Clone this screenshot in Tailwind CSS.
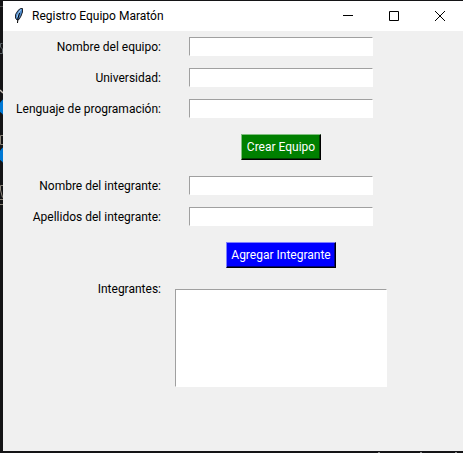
<!DOCTYPE html>
<html lang="es">
<head>
<meta charset="utf-8">
<meta name="viewport" content="width=device-width, initial-scale=1">
<title>Registro Equipo Maratón</title>
<script src="https://cdn.jsdelivr.net/npm/@tailwindcss/browser@4"></script>
</head>
<body class="relative min-h-screen bg-[#141416] pt-px pb-[2px] pl-[3px] flex flex-col text-[12px] leading-[16px] text-black font-[Roboto,'Open_Sans',sans-serif]">
  <!-- Desktop content that shows past the window's left and bottom edges -->
  <svg class="absolute left-0 top-0" width="3" height="210" viewBox="0 0 3 210" fill="none" aria-hidden="true">
    <path d="M0 6.500h3" stroke="#4a4a4a"/>
    <path d="M2.500 43.500H0.500V47L2.500 49V53.500H0" stroke="#5c6468"/>
    <path d="M0 90l3 3" stroke="#c8c0b8" stroke-width="1.500"/>
    <circle cx="8" cy="107" r="9" fill="#0078d4"/>
    <circle cx="8" cy="155" r="9" fill="#0078d4"/>
    <path d="M3 135.500H0.500V144.500H3M3 185.500H0.500V190L2.500 197.500M0 199.500H3M0 204.500H3" stroke="#8a8378"/>
  </svg>
  <svg class="absolute bottom-0 right-0" width="90" height="1" viewBox="0 0 90 1" aria-hidden="true">
    <path d="M5 0h2v1h-2zM47 0h2v1h-2zM82 0h2v1h-2z" fill="#8a8a8a"/>
  </svg>

  <div class="flex-1 flex flex-col bg-[#f0f0f0]">
    <header class="flex h-[30px] items-center bg-white">
      <svg class="ml-[8px] shrink-0" width="16" height="16" viewBox="0 0 16 16" aria-hidden="true">
        <path d="M9.500 0.500H11.500V4L10 8L8 11.500L6 12L4.500 10V6.500L7 2.500Z" fill="#4a86c8" stroke="#20242c"/>
        <path d="M10 1.500L7.500 5L6 9.500" fill="none" stroke="#a9d2f5"/>
        <path d="M8.500 5L7 10L6.500 15" fill="none" stroke="#000"/>
      </svg>
      <h1 class="ml-[5px] flex-1 whitespace-nowrap">Registro Equipo Maratón</h1>
      <div class="flex h-full">
        <button type="button" aria-label="Minimizar" class="flex w-[46px] items-center justify-center"><svg width="10" height="10" viewBox="0 0 10 10" aria-hidden="true"><path d="M0 4.500H10" stroke="#000"/></svg></button>
        <button type="button" aria-label="Maximizar" class="flex w-[46px] items-center justify-center"><svg width="10" height="10" viewBox="0 0 10 10" fill="none" aria-hidden="true"><path d="M0.500 0.500H9.500V9.500H0.500Z" stroke="#000"/></svg></button>
        <button type="button" aria-label="Cerrar" class="flex w-[46px] items-center justify-center"><svg width="10" height="10" viewBox="0 0 10 10" aria-hidden="true"><path d="M0 0L10 10M10 0L0 10" stroke="#000"/></svg></button>
      </div>
    </header>

    <form class="grid grid-cols-[158px_212px] gap-x-[14px]">
      <label for="equipo" class="flex h-[31px] items-center justify-end whitespace-nowrap">Nombre del equipo:</label>
      <div class="flex items-center justify-center"><input id="equipo" type="text" class="h-[19px] w-[184px] border border-t-[#a0a0a0] border-l-[#a0a0a0] border-r-white border-b-white bg-white px-px outline-none"></div>
      <label for="universidad" class="flex h-[31px] items-center justify-end whitespace-nowrap">Universidad:</label>
      <div class="flex items-center justify-center"><input id="universidad" type="text" class="h-[19px] w-[184px] border border-t-[#a0a0a0] border-l-[#a0a0a0] border-r-white border-b-white bg-white px-px outline-none"></div>
      <label for="lenguaje" class="flex h-[31px] items-center justify-end whitespace-nowrap">Lenguaje de programación:</label>
      <div class="flex items-center justify-center"><input id="lenguaje" type="text" class="h-[19px] w-[184px] border border-t-[#a0a0a0] border-l-[#a0a0a0] border-r-white border-b-white bg-white px-px outline-none"></div>

      <div class="col-start-2 flex justify-center py-[10px]">
        <button type="button" class="h-[26px] w-[80px] whitespace-nowrap border border-t-[#80c080] border-l-[#80c080] border-r-black border-b-black bg-[#008000] text-white shadow-[inset_-1px_-1px_0_#004000]">Crear Equipo</button>
      </div>

      <label for="nombre" class="flex h-[31px] items-center justify-end whitespace-nowrap">Nombre del integrante:</label>
      <div class="flex items-center justify-center"><input id="nombre" type="text" class="h-[19px] w-[184px] border border-t-[#a0a0a0] border-l-[#a0a0a0] border-r-white border-b-white bg-white px-px outline-none"></div>
      <label for="apellidos" class="flex h-[31px] items-center justify-end whitespace-nowrap">Apellidos del integrante:</label>
      <div class="flex items-center justify-center"><input id="apellidos" type="text" class="h-[19px] w-[184px] border border-t-[#a0a0a0] border-l-[#a0a0a0] border-r-white border-b-white bg-white px-px outline-none"></div>

      <div class="col-start-2 flex justify-center py-[10px]">
        <button type="button" class="h-[26px] w-[110px] whitespace-nowrap border border-t-[#8080ff] border-l-[#8080ff] border-r-black border-b-black bg-[#0000ff] text-white shadow-[inset_-1px_-1px_0_#000080]">Agregar Integrante</button>
      </div>

      <label for="integrantes" class="pt-[3px] text-right">Integrantes:</label>
      <div class="py-[11px]"><select id="integrantes" size="6" class="block h-[98px] w-full appearance-none overflow-hidden border border-t-[#a0a0a0] border-l-[#a0a0a0] border-r-white border-b-white bg-white outline-none"></select></div>
    </form>
  </div>
</body>
</html>
